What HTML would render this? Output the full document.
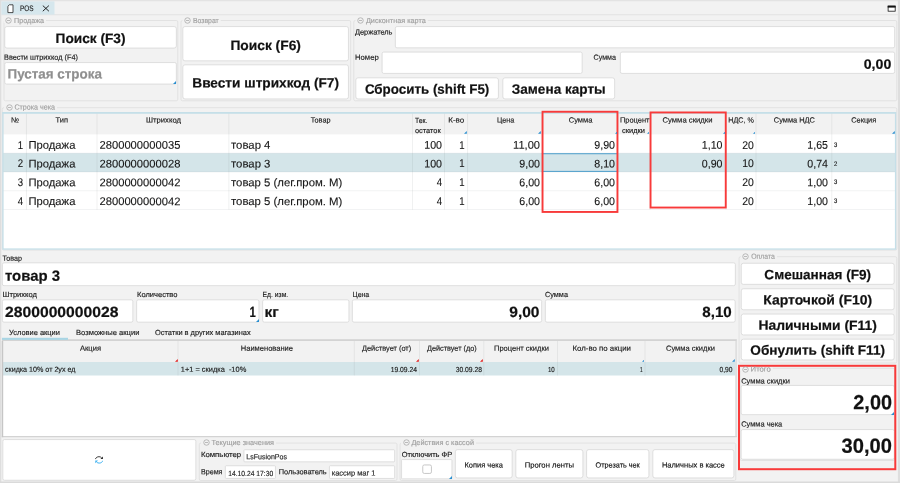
<!DOCTYPE html>
<html lang="ru"><head><meta charset="utf-8"><title>POS</title>
<style>
html,body{margin:0;padding:0;background:#f2f2f2;}
#r{position:relative;width:900px;height:483px;overflow:hidden;font-family:"Liberation Sans",sans-serif;}
#tl{position:absolute;left:0;top:0;width:900px;height:483px;will-change:transform;}
.b{position:absolute;box-sizing:border-box;display:block;}
.t{position:absolute;white-space:pre;text-rendering:geometricPrecision;}
</style></head>
<body><div id="r">
<svg class="b" style="left:0;top:0" width="900" height="483" viewBox="0 0 900 483">
<rect x="0.00" y="0.00" width="900.00" height="483.00" rx="0.00" fill="#f2f2f2"/>
<rect x="0.00" y="0.00" width="900.00" height="1.30" rx="0.00" fill="#e3e3e3"/>
<rect x="0.00" y="0.00" width="1.30" height="483.00" rx="0.00" fill="#dedede"/>
<rect x="897.90" y="0.00" width="2.10" height="483.00" rx="0.00" fill="#dedede"/>
<rect x="0.00" y="481.50" width="900.00" height="1.50" rx="0.00" fill="#dadada"/>
<rect x="1.40" y="14.30" width="896.60" height="0.90" rx="0.00" fill="#e2e2e2"/>
<rect x="1.40" y="1.40" width="53.10" height="13.20" rx="0.00" fill="#d6e7ed"/>
<rect x="4.00" y="20.50" width="173.80" height="80.30" rx="1.50" fill="none" stroke="#e2e2e2" stroke-width="1"/>
<rect x="3.60" y="17.00" width="42.40" height="6.00" rx="0.00" fill="#f2f2f2"/>
<rect x="4.75" y="26.55" width="171.60" height="21.50" rx="2.15" fill="#fff" stroke="#d2d2d2" stroke-width="0.7"/>
<rect x="4.75" y="62.55" width="171.60" height="21.50" rx="1.65" fill="#fff" stroke="#d2d2d2" stroke-width="0.7"/>
<rect x="181.00" y="20.50" width="169.70" height="80.30" rx="1.50" fill="none" stroke="#e2e2e2" stroke-width="1"/>
<rect x="182.50" y="17.00" width="38.25" height="6.00" rx="0.00" fill="#f2f2f2"/>
<rect x="182.85" y="26.55" width="165.60" height="34.30" rx="2.15" fill="#fff" stroke="#d2d2d2" stroke-width="0.7"/>
<rect x="182.85" y="64.85" width="165.60" height="34.10" rx="2.15" fill="#fff" stroke="#d2d2d2" stroke-width="0.7"/>
<rect x="353.80" y="20.50" width="543.00" height="80.30" rx="1.50" fill="none" stroke="#e2e2e2" stroke-width="1"/>
<rect x="355.50" y="17.00" width="72.25" height="6.00" rx="0.00" fill="#f2f2f2"/>
<rect x="395.35" y="26.55" width="499.30" height="21.30" rx="1.65" fill="#fff" stroke="#d2d2d2" stroke-width="0.7"/>
<rect x="382.10" y="52.10" width="200.05" height="21.30" rx="1.65" fill="#fff" stroke="#d2d2d2" stroke-width="0.7"/>
<rect x="620.35" y="52.10" width="274.30" height="21.30" rx="1.65" fill="#fff" stroke="#d2d2d2" stroke-width="0.7"/>
<rect x="355.85" y="77.85" width="142.55" height="21.10" rx="2.15" fill="#fff" stroke="#d2d2d2" stroke-width="0.7"/>
<rect x="502.85" y="77.85" width="111.80" height="21.10" rx="2.15" fill="#fff" stroke="#d2d2d2" stroke-width="0.7"/>
<rect x="2.30" y="107.70" width="894.50" height="142.40" rx="1.50" fill="none" stroke="#e2e2e2" stroke-width="1"/>
<rect x="4.00" y="104.20" width="53.00" height="6.00" rx="0.00" fill="#f2f2f2"/>
<rect x="3.00" y="112.60" width="892.60" height="136.60" rx="0.00" fill="#fff"/>
<rect x="3.00" y="112.60" width="892.60" height="21.80" rx="0.00" fill="#f2f2f2"/>
<rect x="3.00" y="153.20" width="892.60" height="18.80" rx="0.00" fill="#d4e5e9"/>
<rect x="3.00" y="152.70" width="892.60" height="0.90" rx="0.00" fill="rgba(120,130,135,0.10)"/>
<rect x="3.00" y="171.50" width="892.60" height="0.90" rx="0.00" fill="rgba(120,130,135,0.10)"/>
<rect x="3.00" y="190.30" width="892.60" height="0.90" rx="0.00" fill="rgba(120,130,135,0.10)"/>
<rect x="3.00" y="209.10" width="892.60" height="0.90" rx="0.00" fill="rgba(120,130,135,0.10)"/>
<rect x="25.95" y="112.60" width="0.90" height="97.00" rx="0.00" fill="rgba(120,130,135,0.13)"/>
<rect x="96.55" y="112.60" width="0.90" height="97.00" rx="0.00" fill="rgba(120,130,135,0.13)"/>
<rect x="228.45" y="112.60" width="0.90" height="97.00" rx="0.00" fill="rgba(120,130,135,0.13)"/>
<rect x="412.05" y="112.60" width="0.90" height="97.00" rx="0.00" fill="rgba(120,130,135,0.13)"/>
<rect x="444.05" y="112.60" width="0.90" height="97.00" rx="0.00" fill="rgba(120,130,135,0.13)"/>
<rect x="467.15" y="112.60" width="0.90" height="97.00" rx="0.00" fill="rgba(120,130,135,0.13)"/>
<rect x="541.35" y="112.60" width="0.90" height="97.00" rx="0.00" fill="rgba(120,130,135,0.13)"/>
<rect x="617.55" y="112.60" width="0.90" height="97.00" rx="0.00" fill="rgba(120,130,135,0.13)"/>
<rect x="649.55" y="112.60" width="0.90" height="97.00" rx="0.00" fill="rgba(120,130,135,0.13)"/>
<rect x="725.55" y="112.60" width="0.90" height="97.00" rx="0.00" fill="rgba(120,130,135,0.13)"/>
<rect x="755.55" y="112.60" width="0.90" height="97.00" rx="0.00" fill="rgba(120,130,135,0.13)"/>
<rect x="831.35" y="112.60" width="0.90" height="97.00" rx="0.00" fill="rgba(120,130,135,0.13)"/>
<rect x="2.95" y="112.65" width="892.60" height="136.40" rx="0.00" fill="none" stroke="#c5dfe8" stroke-width="1.3"/>
<rect x="2.30" y="112.10" width="893.90" height="1.60" rx="0.00" fill="#c5dfe8"/>
<rect x="541.80" y="153.30" width="76.20" height="0.90" rx="0.00" fill="#3f97c9"/>
<rect x="541.80" y="170.90" width="76.20" height="0.90" rx="0.00" fill="#3f97c9"/>
<rect x="542.55" y="111.75" width="74.90" height="100.20" rx="0.00" fill="none" stroke="#f83a3a" stroke-width="1.9"/>
<rect x="650.55" y="112.45" width="75.20" height="95.10" rx="0.00" fill="none" stroke="#f83a3a" stroke-width="1.9"/>
<rect x="2.35" y="262.85" width="733.00" height="22.80" rx="1.65" fill="#fff" stroke="#d2d2d2" stroke-width="0.7"/>
<rect x="2.35" y="299.85" width="130.50" height="22.30" rx="1.65" fill="#fff" stroke="#d2d2d2" stroke-width="0.7"/>
<rect x="136.65" y="299.85" width="122.30" height="22.30" rx="1.65" fill="#fff" stroke="#d2d2d2" stroke-width="0.7"/>
<rect x="262.65" y="299.85" width="86.30" height="22.30" rx="1.65" fill="#fff" stroke="#d2d2d2" stroke-width="0.7"/>
<rect x="352.35" y="299.85" width="189.30" height="22.30" rx="1.65" fill="#fff" stroke="#d2d2d2" stroke-width="0.7"/>
<rect x="545.35" y="299.85" width="189.80" height="22.30" rx="1.65" fill="#fff" stroke="#d2d2d2" stroke-width="0.7"/>
<rect x="2.00" y="339.20" width="734.80" height="1.90" rx="0.00" fill="#d3d3d3"/>
<rect x="2.00" y="337.80" width="66.00" height="2.10" rx="0.00" fill="#a9d5e4"/>
<rect x="3.00" y="341.00" width="732.40" height="95.00" rx="0.00" fill="#fff"/>
<rect x="3.00" y="341.00" width="732.40" height="21.00" rx="0.00" fill="#f2f2f2"/>
<rect x="3.00" y="362.00" width="732.40" height="13.50" rx="0.00" fill="#d4e5e9"/>
<rect x="177.55" y="341.00" width="0.90" height="34.50" rx="0.00" fill="rgba(120,130,135,0.13)"/>
<rect x="353.85" y="341.00" width="0.90" height="34.50" rx="0.00" fill="rgba(120,130,135,0.13)"/>
<rect x="419.05" y="341.00" width="0.90" height="34.50" rx="0.00" fill="rgba(120,130,135,0.13)"/>
<rect x="483.35" y="341.00" width="0.90" height="34.50" rx="0.00" fill="rgba(120,130,135,0.13)"/>
<rect x="557.05" y="341.00" width="0.90" height="34.50" rx="0.00" fill="rgba(120,130,135,0.13)"/>
<rect x="644.55" y="341.00" width="0.90" height="34.50" rx="0.00" fill="rgba(120,130,135,0.13)"/>
<rect x="735.40" y="341.00" width="1.40" height="96.00" rx="0.00" fill="#dadada"/>
<rect x="1.80" y="436.00" width="735.00" height="1.20" rx="0.00" fill="#d3d3d3"/>
<rect x="1.80" y="341.00" width="1.40" height="96.20" rx="0.00" fill="#c6c6c6"/>
<rect x="739.10" y="256.70" width="157.70" height="106.30" rx="1.50" fill="none" stroke="#e2e2e2" stroke-width="1"/>
<rect x="740.80" y="253.20" width="36.20" height="6.00" rx="0.00" fill="#f2f2f2"/>
<rect x="741.25" y="263.25" width="152.90" height="21.10" rx="2.15" fill="#fff" stroke="#d2d2d2" stroke-width="0.7"/>
<rect x="741.25" y="288.75" width="152.90" height="21.00" rx="2.15" fill="#fff" stroke="#d2d2d2" stroke-width="0.7"/>
<rect x="741.25" y="314.05" width="152.90" height="20.90" rx="2.15" fill="#fff" stroke="#d2d2d2" stroke-width="0.7"/>
<rect x="741.25" y="339.15" width="152.90" height="20.80" rx="2.15" fill="#fff" stroke="#d2d2d2" stroke-width="0.7"/>
<rect x="740.00" y="368.30" width="154.50" height="92.20" rx="1.50" fill="none" stroke="#e2e2e2" stroke-width="1"/>
<rect x="740.20" y="364.80" width="32.60" height="6.00" rx="0.00" fill="#f2f2f2"/>
<rect x="741.15" y="385.45" width="153.10" height="29.20" rx="1.65" fill="#fff" stroke="#d2d2d2" stroke-width="0.7"/>
<rect x="741.15" y="429.55" width="153.10" height="29.70" rx="1.65" fill="#fff" stroke="#d2d2d2" stroke-width="0.7"/>
<rect x="739.00" y="365.80" width="156.30" height="103.40" rx="0.00" fill="none" stroke="#f83a3a" stroke-width="2.0"/>
<rect x="2.85" y="439.55" width="193.00" height="40.70" rx="1.65" fill="#fff" stroke="#d2d2d2" stroke-width="0.7"/>
<rect x="199.30" y="443.10" width="197.70" height="37.40" rx="1.50" fill="none" stroke="#e2e2e2" stroke-width="1"/>
<rect x="201.00" y="439.60" width="75.00" height="6.00" rx="0.00" fill="#f2f2f2"/>
<rect x="243.95" y="449.75" width="150.70" height="12.10" rx="0.85" fill="#fff" stroke="#d2d2d2" stroke-width="0.7"/>
<rect x="225.35" y="465.75" width="50.10" height="12.70" rx="0.85" fill="#fff" stroke="#d2d2d2" stroke-width="0.7"/>
<rect x="329.45" y="465.75" width="65.20" height="12.70" rx="0.85" fill="#fff" stroke="#d2d2d2" stroke-width="0.7"/>
<rect x="400.10" y="443.10" width="335.70" height="37.40" rx="1.50" fill="none" stroke="#e2e2e2" stroke-width="1"/>
<rect x="401.00" y="439.60" width="75.00" height="6.00" rx="0.00" fill="#f2f2f2"/>
<rect x="401.55" y="459.55" width="50.40" height="19.30" rx="0.85" fill="#fff" stroke="#d2d2d2" stroke-width="0.7"/>
<rect x="422.75" y="464.95" width="8.70" height="8.50" rx="1.55" fill="#fff" stroke="#c2c2c2" stroke-width="0.9"/>
<rect x="455.35" y="449.65" width="56.80" height="28.30" rx="2.15" fill="#fff" stroke="#d2d2d2" stroke-width="0.7"/>
<rect x="515.85" y="449.65" width="67.05" height="28.30" rx="2.15" fill="#fff" stroke="#d2d2d2" stroke-width="0.7"/>
<rect x="586.60" y="449.65" width="62.30" height="28.30" rx="2.15" fill="#fff" stroke="#d2d2d2" stroke-width="0.7"/>
<rect x="652.85" y="449.65" width="81.05" height="28.30" rx="2.15" fill="#fff" stroke="#d2d2d2" stroke-width="0.7"/>
</svg>
<div id="tl">
<svg class="b" style="left:6.7px;top:3.6px" width="8" height="10" viewBox="0 0 8 10"><path d="M2.3 0.8 H6.0 V8.6 H0.9 V2.2 Z" fill="#fff" stroke="#222" stroke-width="0.8" stroke-linejoin="round"/></svg>
<div class="t" style="left:20px;top:5px;font-size:8px;line-height:8px;color:#222;-webkit-text-stroke:0.15px #222;transform-origin:0.00px 50%;transform:translate(0.00px,0.40px) rotate(0.03deg) scaleX(0.8057);">POS</div>
<svg class="b" style="left:41.5px;top:5.3px" width="8" height="7" viewBox="0 0 8 7"><path d="M0.8 0.6 L6.9 6.2 M6.9 0.6 L0.8 6.2" stroke="#111" stroke-width="0.9" fill="none"/></svg>
<svg class="b" style="left:887.4px;top:5.2px" width="9.4" height="7.4" viewBox="0 0 9.4 7.4"><rect x="0" y="0" width="9.4" height="7.4" fill="#fafafa"/><rect x="1.1" y="1.1" width="7.1" height="5.1" fill="#fff" stroke="#111" stroke-width="0.8"/><rect x="0.7" y="0.7" width="7.9" height="1.9" fill="#111"/></svg>
<svg class="b" style="left:5.10px;top:16.90px" width="7" height="7" viewBox="0 0 7 7"><circle cx="3.5" cy="3.5" r="2.75" fill="none" stroke="#a0a0a0" stroke-width="0.7"/><line x1="2" y1="3.5" x2="5" y2="3.5" stroke="#a0a0a0" stroke-width="0.7"/></svg>
<div class="t" style="left:14px;top:16px;font-size:7.3px;line-height:7.3px;color:#a0a0a0;-webkit-text-stroke:0.15px #a0a0a0;transform-origin:0.00px 50%;transform:translate(0.00px,0.90px) rotate(0.03deg) scaleX(0.9832);">Продажа</div>
<div class="t" style="left:55px;top:32px;font-size:13.6px;line-height:13.6px;color:#111;font-weight:bold;-webkit-text-stroke:0.2px #111;transform-origin:34.75px 50%;transform:translate(0.80px,0.10px) rotate(0.03deg) scaleX(1.0073);">Поиск (F3)</div>
<div class="t" style="left:4px;top:53px;font-size:7.4px;line-height:7.4px;color:#1a1a1a;-webkit-text-stroke:0.15px #1a1a1a;transform-origin:0.00px 50%;transform:translate(0.00px,0.70px) rotate(0.03deg) scaleX(0.9911);">Ввести штрихкод (F4)</div>
<div class="t" style="left:7px;top:67px;font-size:13.6px;line-height:13.6px;color:#8f8f8f;font-weight:bold;-webkit-text-stroke:0.2px #8f8f8f;transform-origin:0.00px 50%;transform:translate(0.50px,0.50px) rotate(0.03deg) scaleX(0.9863);">Пустая строка</div>
<svg class="b" style="left:172.80px;top:80.60px" width="3.0" height="3.0" viewBox="0 0 10 10"><polygon points="10,0 10,10 0,10" fill="#2a8fd0"/></svg>
<svg class="b" style="left:184.00px;top:16.90px" width="7" height="7" viewBox="0 0 7 7"><circle cx="3.5" cy="3.5" r="2.75" fill="none" stroke="#a0a0a0" stroke-width="0.7"/><line x1="2" y1="3.5" x2="5" y2="3.5" stroke="#a0a0a0" stroke-width="0.7"/></svg>
<div class="t" style="left:192px;top:16px;font-size:7.3px;line-height:7.3px;color:#a0a0a0;-webkit-text-stroke:0.15px #a0a0a0;transform-origin:0.00px 50%;transform:translate(0.90px,0.90px) rotate(0.03deg) scaleX(0.9443);">Возврат</div>
<div class="t" style="left:230px;top:39px;font-size:13.6px;line-height:13.6px;color:#111;font-weight:bold;-webkit-text-stroke:0.2px #111;transform-origin:34.75px 50%;transform:translate(0.90px,0.00px) rotate(0.03deg) scaleX(1.0144);">Поиск (F6)</div>
<div class="t" style="left:192px;top:76px;font-size:13.6px;line-height:13.6px;color:#111;font-weight:bold;-webkit-text-stroke:0.2px #111;transform-origin:73.03px 50%;transform:translate(0.62px,0.50px) rotate(0.03deg) scaleX(1.0047);">Ввести штрихкод (F7)</div>
<svg class="b" style="left:357.00px;top:16.90px" width="7" height="7" viewBox="0 0 7 7"><circle cx="3.5" cy="3.5" r="2.75" fill="none" stroke="#a0a0a0" stroke-width="0.7"/><line x1="2" y1="3.5" x2="5" y2="3.5" stroke="#a0a0a0" stroke-width="0.7"/></svg>
<div class="t" style="left:365px;top:16px;font-size:7.3px;line-height:7.3px;color:#a0a0a0;-webkit-text-stroke:0.15px #a0a0a0;transform-origin:0.00px 50%;transform:translate(0.90px,0.90px) rotate(0.03deg) scaleX(0.9956);">Дисконтная карта</div>
<div class="t" style="left:355px;top:28px;font-size:7.4px;line-height:7.4px;color:#1a1a1a;-webkit-text-stroke:0.15px #1a1a1a;transform-origin:0.00px 50%;transform:translate(0.00px,0.60px) rotate(0.03deg) scaleX(1.0005);">Держатель</div>
<div class="t" style="left:355px;top:53px;font-size:7.4px;line-height:7.4px;color:#1a1a1a;-webkit-text-stroke:0.15px #1a1a1a;transform-origin:0.00px 50%;transform:translate(0.00px,0.80px) rotate(0.03deg) scaleX(1.0420);">Номер</div>
<div class="t" style="left:593px;top:53px;font-size:7.4px;line-height:7.4px;color:#1a1a1a;-webkit-text-stroke:0.15px #1a1a1a;transform-origin:0.00px 50%;transform:translate(0.50px,0.80px) rotate(0.03deg) scaleX(0.9668);">Сумма</div>
<div class="t" style="left:864px;top:57px;font-size:13.6px;line-height:13.6px;color:#111;font-weight:bold;-webkit-text-stroke:0.2px #111;transform-origin:26.45px 50%;transform:translate(0.80px,0.75px) rotate(0.03deg) scaleX(1.0396);">0,00</div>
<div class="t" style="left:363px;top:82px;font-size:13.6px;line-height:13.6px;color:#111;font-weight:bold;-webkit-text-stroke:0.2px #111;transform-origin:63.31px 50%;transform:translate(0.82px,0.75px) rotate(0.03deg) scaleX(0.9833);">Сбросить (shift F5)</div>
<div class="t" style="left:511px;top:82px;font-size:13.6px;line-height:13.6px;color:#111;font-weight:bold;-webkit-text-stroke:0.2px #111;transform-origin:47.02px 50%;transform:translate(0.73px,0.75px) rotate(0.03deg) scaleX(0.9995);">Замена карты</div>
<svg class="b" style="left:5.50px;top:103.60px" width="7" height="7" viewBox="0 0 7 7"><circle cx="3.5" cy="3.5" r="2.75" fill="none" stroke="#a0a0a0" stroke-width="0.7"/><line x1="2" y1="3.5" x2="5" y2="3.5" stroke="#a0a0a0" stroke-width="0.7"/></svg>
<div class="t" style="left:14px;top:103px;font-size:7.3px;line-height:7.3px;color:#a0a0a0;-webkit-text-stroke:0.15px #a0a0a0;transform-origin:0.00px 50%;transform:translate(0.40px,0.60px) rotate(0.03deg) scaleX(0.9783);">Строка чека</div>
<div class="t" style="left:11px;top:116px;font-size:7.4px;line-height:7.4px;color:#1a1a1a;-webkit-text-stroke:0.15px #1a1a1a;transform-origin:3.98px 50%;transform:translate(0.02px,0.50px) rotate(0.03deg) scaleX(1.0057);">№</div>
<div class="t" style="left:55px;top:116px;font-size:7.4px;line-height:7.4px;color:#1a1a1a;-webkit-text-stroke:0.15px #1a1a1a;transform-origin:6.16px 50%;transform:translate(0.59px,0.50px) rotate(0.03deg) scaleX(1.0145);">Тип</div>
<div class="t" style="left:146px;top:116px;font-size:7.4px;line-height:7.4px;color:#1a1a1a;-webkit-text-stroke:0.15px #1a1a1a;transform-origin:16.85px 50%;transform:translate(0.65px,0.50px) rotate(0.03deg) scaleX(1.0384);">Штрихкод</div>
<div class="t" style="left:310px;top:116px;font-size:7.4px;line-height:7.4px;color:#1a1a1a;-webkit-text-stroke:0.15px #1a1a1a;transform-origin:10.06px 50%;transform:translate(0.54px,0.50px) rotate(0.03deg) scaleX(0.9812);">Товар</div>
<div class="t" style="left:415px;top:116px;font-size:7.4px;line-height:7.4px;color:#1a1a1a;-webkit-text-stroke:0.15px #1a1a1a;transform-origin:0.00px 50%;transform:translate(0.00px,0.50px) rotate(0.03deg) scaleX(0.9256);">Тек.</div>
<div class="t" style="left:415px;top:127px;font-size:7.4px;line-height:7.4px;color:#1a1a1a;-webkit-text-stroke:0.15px #1a1a1a;transform-origin:0.00px 50%;transform:translate(0.00px,0.00px) rotate(0.03deg) scaleX(0.9985);">остаток</div>
<div class="t" style="left:448px;top:116px;font-size:7.4px;line-height:7.4px;color:#1a1a1a;-webkit-text-stroke:0.15px #1a1a1a;transform-origin:7.36px 50%;transform:translate(0.89px,0.50px) rotate(0.03deg) scaleX(1.0865);">К-во</div>
<div class="t" style="left:496px;top:116px;font-size:7.4px;line-height:7.4px;color:#1a1a1a;-webkit-text-stroke:0.15px #1a1a1a;transform-origin:8.92px 50%;transform:translate(0.68px,0.50px) rotate(0.03deg) scaleX(0.9673);">Цена</div>
<div class="t" style="left:568px;top:116px;font-size:7.4px;line-height:7.4px;color:#1a1a1a;-webkit-text-stroke:0.15px #1a1a1a;transform-origin:11.64px 50%;transform:translate(0.96px,0.50px) rotate(0.03deg) scaleX(1.0205);">Сумма</div>
<div class="t" style="left:620px;top:116px;font-size:7.4px;line-height:7.4px;color:#1a1a1a;-webkit-text-stroke:0.15px #1a1a1a;transform-origin:14.65px 50%;transform:translate(0.10px,0.50px) rotate(0.03deg) scaleX(1.0067);">Процент</div>
<div class="t" style="left:622px;top:127px;font-size:7.4px;line-height:7.4px;color:#1a1a1a;-webkit-text-stroke:0.15px #1a1a1a;transform-origin:11.38px 50%;transform:translate(0.12px,0.00px) rotate(0.03deg) scaleX(1.0108);">скидки</div>
<div class="t" style="left:663px;top:116px;font-size:7.4px;line-height:7.4px;color:#1a1a1a;-webkit-text-stroke:0.15px #1a1a1a;transform-origin:24.03px 50%;transform:translate(0.47px,0.50px) rotate(0.03deg) scaleX(1.0403);">Сумма скидки</div>
<div class="t" style="left:727px;top:116px;font-size:7.4px;line-height:7.4px;color:#1a1a1a;-webkit-text-stroke:0.15px #1a1a1a;transform-origin:13.19px 50%;transform:translate(0.81px,0.50px) rotate(0.03deg) scaleX(0.9666);">НДС, %</div>
<div class="t" style="left:773px;top:116px;font-size:7.4px;line-height:7.4px;color:#1a1a1a;-webkit-text-stroke:0.15px #1a1a1a;transform-origin:20.50px 50%;transform:translate(0.90px,0.50px) rotate(0.03deg) scaleX(1.0062);">Сумма НДС</div>
<div class="t" style="left:851px;top:116px;font-size:7.4px;line-height:7.4px;color:#1a1a1a;-webkit-text-stroke:0.15px #1a1a1a;transform-origin:12.54px 50%;transform:translate(0.21px,0.50px) rotate(0.03deg) scaleX(0.9966);">Секция</div>
<svg class="b" style="left:464.10px;top:131.00px" width="2.8" height="2.8" viewBox="0 0 10 10"><polygon points="10,0 10,10 0,10" fill="#2a8fd0"/></svg>
<svg class="b" style="left:538.30px;top:131.00px" width="2.8" height="2.8" viewBox="0 0 10 10"><polygon points="10,0 10,10 0,10" fill="#2a8fd0"/></svg>
<svg class="b" style="left:614.50px;top:131.00px" width="2.8" height="2.8" viewBox="0 0 10 10"><polygon points="10,0 10,10 0,10" fill="#2a8fd0"/></svg>
<svg class="b" style="left:646.50px;top:131.00px" width="2.8" height="2.8" viewBox="0 0 10 10"><polygon points="10,0 10,10 0,10" fill="#2a8fd0"/></svg>
<svg class="b" style="left:722.50px;top:131.00px" width="2.8" height="2.8" viewBox="0 0 10 10"><polygon points="10,0 10,10 0,10" fill="#2a8fd0"/></svg>
<svg class="b" style="left:752.50px;top:131.00px" width="2.8" height="2.8" viewBox="0 0 10 10"><polygon points="10,0 10,10 0,10" fill="#2a8fd0"/></svg>
<svg class="b" style="left:892.00px;top:131.00px" width="2.8" height="2.8" viewBox="0 0 10 10"><polygon points="10,0 10,10 0,10" fill="#2a8fd0"/></svg>
<div class="t" style="left:16px;top:140px;font-size:11.2px;line-height:11.2px;color:#161616;-webkit-text-stroke:0.12px #161616;transform-origin:6.22px 50%;transform:translate(0.78px,0.70px) rotate(0.03deg) scaleX(0.8575);">1</div>
<div class="t" style="left:28px;top:140px;font-size:11.2px;line-height:11.2px;color:#161616;-webkit-text-stroke:0.12px #161616;transform-origin:0.00px 50%;transform:translate(0.50px,0.70px) rotate(0.03deg) scaleX(1.0039);">Продажа</div>
<div class="t" style="left:99px;top:140px;font-size:11.2px;line-height:11.2px;color:#161616;-webkit-text-stroke:0.12px #161616;transform-origin:0.00px 50%;transform:translate(0.50px,0.70px) rotate(0.03deg) scaleX(1.0003);">2800000000035</div>
<div class="t" style="left:231px;top:140px;font-size:11.2px;line-height:11.2px;color:#161616;-webkit-text-stroke:0.12px #161616;transform-origin:0.00px 50%;transform:translate(0.00px,0.70px) rotate(0.03deg) scaleX(1.0164);">товар 4</div>
<div class="t" style="left:423px;top:140px;font-size:11.2px;line-height:11.2px;color:#161616;-webkit-text-stroke:0.12px #161616;transform-origin:18.70px 50%;transform:translate(0.30px,0.70px) rotate(0.03deg) scaleX(0.9511);">100</div>
<div class="t" style="left:458px;top:140px;font-size:11.2px;line-height:11.2px;color:#161616;-webkit-text-stroke:0.12px #161616;transform-origin:6.22px 50%;transform:translate(0.28px,0.70px) rotate(0.03deg) scaleX(0.8575);">1</div>
<div class="t" style="left:512px;top:140px;font-size:11.2px;line-height:11.2px;color:#161616;-webkit-text-stroke:0.12px #161616;transform-origin:27.22px 50%;transform:translate(0.78px,0.70px) rotate(0.03deg) scaleX(0.9891);">11,00</div>
<div class="t" style="left:593px;top:140px;font-size:11.2px;line-height:11.2px;color:#161616;-webkit-text-stroke:0.12px #161616;transform-origin:21.78px 50%;transform:translate(0.22px,0.70px) rotate(0.03deg) scaleX(0.9498);">9,90</div>
<div class="t" style="left:700px;top:140px;font-size:11.2px;line-height:11.2px;color:#161616;-webkit-text-stroke:0.12px #161616;transform-origin:21.78px 50%;transform:translate(0.72px,0.70px) rotate(0.03deg) scaleX(0.9498);">1,10</div>
<div class="t" style="left:741px;top:140px;font-size:11.2px;line-height:11.2px;color:#161616;-webkit-text-stroke:0.12px #161616;transform-origin:12.43px 50%;transform:translate(0.32px,0.70px) rotate(0.03deg) scaleX(0.9299);">20</div>
<div class="t" style="left:806px;top:140px;font-size:11.2px;line-height:11.2px;color:#161616;-webkit-text-stroke:0.12px #161616;transform-origin:21.78px 50%;transform:translate(0.22px,0.70px) rotate(0.03deg) scaleX(0.9498);">1,65</div>
<div class="t" style="left:834px;top:142px;font-size:6.4px;line-height:6.4px;color:#161616;-webkit-text-stroke:0.15px #161616;transform-origin:0.00px 50%;transform:translate(0.00px,0.70px) rotate(0.03deg) scaleX(0.9291);">3</div>
<div class="t" style="left:16px;top:159px;font-size:11.2px;line-height:11.2px;color:#161616;-webkit-text-stroke:0.12px #161616;transform-origin:6.22px 50%;transform:translate(0.78px,0.50px) rotate(0.03deg) scaleX(0.8575);">2</div>
<div class="t" style="left:28px;top:159px;font-size:11.2px;line-height:11.2px;color:#161616;-webkit-text-stroke:0.12px #161616;transform-origin:0.00px 50%;transform:translate(0.50px,0.50px) rotate(0.03deg) scaleX(1.0039);">Продажа</div>
<div class="t" style="left:99px;top:159px;font-size:11.2px;line-height:11.2px;color:#161616;-webkit-text-stroke:0.12px #161616;transform-origin:0.00px 50%;transform:translate(0.50px,0.50px) rotate(0.03deg) scaleX(1.0003);">2800000000028</div>
<div class="t" style="left:231px;top:159px;font-size:11.2px;line-height:11.2px;color:#161616;-webkit-text-stroke:0.12px #161616;transform-origin:0.00px 50%;transform:translate(0.00px,0.50px) rotate(0.03deg) scaleX(1.0164);">товар 3</div>
<div class="t" style="left:423px;top:159px;font-size:11.2px;line-height:11.2px;color:#161616;-webkit-text-stroke:0.12px #161616;transform-origin:18.70px 50%;transform:translate(0.30px,0.50px) rotate(0.03deg) scaleX(0.9511);">100</div>
<div class="t" style="left:458px;top:159px;font-size:11.2px;line-height:11.2px;color:#161616;-webkit-text-stroke:0.12px #161616;transform-origin:6.22px 50%;transform:translate(0.28px,0.50px) rotate(0.03deg) scaleX(0.8575);">1</div>
<div class="t" style="left:518px;top:159px;font-size:11.2px;line-height:11.2px;color:#161616;-webkit-text-stroke:0.12px #161616;transform-origin:21.78px 50%;transform:translate(0.22px,0.50px) rotate(0.03deg) scaleX(0.9498);">9,00</div>
<div class="t" style="left:593px;top:159px;font-size:11.2px;line-height:11.2px;color:#161616;-webkit-text-stroke:0.12px #161616;transform-origin:21.78px 50%;transform:translate(0.22px,0.50px) rotate(0.03deg) scaleX(0.9498);">8,10</div>
<div class="t" style="left:700px;top:159px;font-size:11.2px;line-height:11.2px;color:#161616;-webkit-text-stroke:0.12px #161616;transform-origin:21.78px 50%;transform:translate(0.72px,0.50px) rotate(0.03deg) scaleX(0.9498);">0,90</div>
<div class="t" style="left:741px;top:159px;font-size:11.2px;line-height:11.2px;color:#161616;-webkit-text-stroke:0.12px #161616;transform-origin:12.43px 50%;transform:translate(0.32px,0.50px) rotate(0.03deg) scaleX(0.9299);">10</div>
<div class="t" style="left:806px;top:159px;font-size:11.2px;line-height:11.2px;color:#161616;-webkit-text-stroke:0.12px #161616;transform-origin:21.78px 50%;transform:translate(0.22px,0.50px) rotate(0.03deg) scaleX(0.9498);">0,74</div>
<div class="t" style="left:834px;top:161px;font-size:6.4px;line-height:6.4px;color:#161616;-webkit-text-stroke:0.15px #161616;transform-origin:0.00px 50%;transform:translate(0.00px,0.50px) rotate(0.03deg) scaleX(0.9291);">2</div>
<div class="t" style="left:16px;top:178px;font-size:11.2px;line-height:11.2px;color:#161616;-webkit-text-stroke:0.12px #161616;transform-origin:6.22px 50%;transform:translate(0.78px,0.30px) rotate(0.03deg) scaleX(0.8575);">3</div>
<div class="t" style="left:28px;top:178px;font-size:11.2px;line-height:11.2px;color:#161616;-webkit-text-stroke:0.12px #161616;transform-origin:0.00px 50%;transform:translate(0.50px,0.30px) rotate(0.03deg) scaleX(1.0039);">Продажа</div>
<div class="t" style="left:99px;top:178px;font-size:11.2px;line-height:11.2px;color:#161616;-webkit-text-stroke:0.12px #161616;transform-origin:0.00px 50%;transform:translate(0.50px,0.30px) rotate(0.03deg) scaleX(1.0003);">2800000000042</div>
<div class="t" style="left:231px;top:178px;font-size:11.2px;line-height:11.2px;color:#161616;-webkit-text-stroke:0.12px #161616;transform-origin:0.00px 50%;transform:translate(0.00px,0.30px) rotate(0.03deg) scaleX(1.0153);">товар 5 (лег.пром. М)</div>
<div class="t" style="left:435px;top:178px;font-size:11.2px;line-height:11.2px;color:#161616;-webkit-text-stroke:0.12px #161616;transform-origin:6.22px 50%;transform:translate(0.78px,0.30px) rotate(0.03deg) scaleX(0.8575);">4</div>
<div class="t" style="left:458px;top:178px;font-size:11.2px;line-height:11.2px;color:#161616;-webkit-text-stroke:0.12px #161616;transform-origin:6.22px 50%;transform:translate(0.28px,0.30px) rotate(0.03deg) scaleX(0.8575);">1</div>
<div class="t" style="left:518px;top:178px;font-size:11.2px;line-height:11.2px;color:#161616;-webkit-text-stroke:0.12px #161616;transform-origin:21.78px 50%;transform:translate(0.22px,0.30px) rotate(0.03deg) scaleX(0.9498);">6,00</div>
<div class="t" style="left:593px;top:178px;font-size:11.2px;line-height:11.2px;color:#161616;-webkit-text-stroke:0.12px #161616;transform-origin:21.78px 50%;transform:translate(0.22px,0.30px) rotate(0.03deg) scaleX(0.9498);">6,00</div>
<div class="t" style="left:741px;top:178px;font-size:11.2px;line-height:11.2px;color:#161616;-webkit-text-stroke:0.12px #161616;transform-origin:12.43px 50%;transform:translate(0.32px,0.30px) rotate(0.03deg) scaleX(0.9299);">20</div>
<div class="t" style="left:806px;top:178px;font-size:11.2px;line-height:11.2px;color:#161616;-webkit-text-stroke:0.12px #161616;transform-origin:21.78px 50%;transform:translate(0.22px,0.30px) rotate(0.03deg) scaleX(0.9498);">1,00</div>
<div class="t" style="left:834px;top:180px;font-size:6.4px;line-height:6.4px;color:#161616;-webkit-text-stroke:0.15px #161616;transform-origin:0.00px 50%;transform:translate(0.00px,0.30px) rotate(0.03deg) scaleX(0.9291);">3</div>
<div class="t" style="left:16px;top:197px;font-size:11.2px;line-height:11.2px;color:#161616;-webkit-text-stroke:0.12px #161616;transform-origin:6.22px 50%;transform:translate(0.78px,0.10px) rotate(0.03deg) scaleX(0.8575);">4</div>
<div class="t" style="left:28px;top:197px;font-size:11.2px;line-height:11.2px;color:#161616;-webkit-text-stroke:0.12px #161616;transform-origin:0.00px 50%;transform:translate(0.50px,0.10px) rotate(0.03deg) scaleX(1.0039);">Продажа</div>
<div class="t" style="left:99px;top:197px;font-size:11.2px;line-height:11.2px;color:#161616;-webkit-text-stroke:0.12px #161616;transform-origin:0.00px 50%;transform:translate(0.50px,0.10px) rotate(0.03deg) scaleX(1.0003);">2800000000042</div>
<div class="t" style="left:231px;top:197px;font-size:11.2px;line-height:11.2px;color:#161616;-webkit-text-stroke:0.12px #161616;transform-origin:0.00px 50%;transform:translate(0.00px,0.10px) rotate(0.03deg) scaleX(1.0153);">товар 5 (лег.пром. М)</div>
<div class="t" style="left:435px;top:197px;font-size:11.2px;line-height:11.2px;color:#161616;-webkit-text-stroke:0.12px #161616;transform-origin:6.22px 50%;transform:translate(0.78px,0.10px) rotate(0.03deg) scaleX(0.8575);">4</div>
<div class="t" style="left:458px;top:197px;font-size:11.2px;line-height:11.2px;color:#161616;-webkit-text-stroke:0.12px #161616;transform-origin:6.22px 50%;transform:translate(0.28px,0.10px) rotate(0.03deg) scaleX(0.8575);">1</div>
<div class="t" style="left:518px;top:197px;font-size:11.2px;line-height:11.2px;color:#161616;-webkit-text-stroke:0.12px #161616;transform-origin:21.78px 50%;transform:translate(0.22px,0.10px) rotate(0.03deg) scaleX(0.9498);">6,00</div>
<div class="t" style="left:593px;top:197px;font-size:11.2px;line-height:11.2px;color:#161616;-webkit-text-stroke:0.12px #161616;transform-origin:21.78px 50%;transform:translate(0.22px,0.10px) rotate(0.03deg) scaleX(0.9498);">6,00</div>
<div class="t" style="left:741px;top:197px;font-size:11.2px;line-height:11.2px;color:#161616;-webkit-text-stroke:0.12px #161616;transform-origin:12.43px 50%;transform:translate(0.32px,0.10px) rotate(0.03deg) scaleX(0.9299);">20</div>
<div class="t" style="left:806px;top:197px;font-size:11.2px;line-height:11.2px;color:#161616;-webkit-text-stroke:0.12px #161616;transform-origin:21.78px 50%;transform:translate(0.22px,0.10px) rotate(0.03deg) scaleX(0.9498);">1,00</div>
<div class="t" style="left:834px;top:199px;font-size:6.4px;line-height:6.4px;color:#161616;-webkit-text-stroke:0.15px #161616;transform-origin:0.00px 50%;transform:translate(0.00px,0.10px) rotate(0.03deg) scaleX(0.9291);">3</div>
<div class="t" style="left:2px;top:254px;font-size:7.4px;line-height:7.4px;color:#1a1a1a;-webkit-text-stroke:0.15px #1a1a1a;transform-origin:0.00px 50%;transform:translate(0.50px,0.75px) rotate(0.03deg) scaleX(0.9688);">Товар</div>
<div class="t" style="left:5px;top:269px;font-size:14.8px;line-height:14.8px;color:#111;font-weight:bold;-webkit-text-stroke:0.2px #111;transform-origin:0.00px 50%;transform:translate(0.00px,0.75px) rotate(0.03deg) scaleX(1.0071);">товар 3</div>
<div class="t" style="left:2px;top:291px;font-size:7.4px;line-height:7.4px;color:#1a1a1a;-webkit-text-stroke:0.15px #1a1a1a;transform-origin:0.00px 50%;transform:translate(0.50px,0.00px) rotate(0.03deg) scaleX(1.0235);">Штрихкод</div>
<div class="t" style="left:5px;top:306px;font-size:14.8px;line-height:14.8px;color:#111;font-weight:bold;-webkit-text-stroke:0.2px #111;transform-origin:0.00px 50%;transform:translate(0.00px,0.00px) rotate(0.03deg) scaleX(1.0607);">2800000000028</div>
<div class="t" style="left:137px;top:291px;font-size:7.4px;line-height:7.4px;color:#1a1a1a;-webkit-text-stroke:0.15px #1a1a1a;transform-origin:0.00px 50%;transform:translate(0.00px,0.00px) rotate(0.03deg) scaleX(1.0192);">Количество</div>
<div class="t" style="left:247px;top:306px;font-size:14.8px;line-height:14.8px;color:#111;font-weight:bold;-webkit-text-stroke:0.2px #111;transform-origin:8.21px 50%;transform:translate(0.54px,0.00px) rotate(0.03deg) scaleX(0.7670);">1</div>
<svg class="b" style="left:255.60px;top:318.80px" width="3.0" height="3.0" viewBox="0 0 10 10"><polygon points="10,0 10,10 0,10" fill="#2a8fd0"/></svg>
<div class="t" style="left:262px;top:291px;font-size:7.4px;line-height:7.4px;color:#1a1a1a;-webkit-text-stroke:0.15px #1a1a1a;transform-origin:0.00px 50%;transform:translate(0.50px,0.00px) rotate(0.03deg) scaleX(0.9181);">Ед. изм.</div>
<div class="t" style="left:264px;top:306px;font-size:14.8px;line-height:14.8px;color:#111;font-weight:bold;-webkit-text-stroke:0.2px #111;transform-origin:0.00px 50%;transform:translate(0.50px,0.00px) rotate(0.03deg) scaleX(1.0523);">кг</div>
<div class="t" style="left:352px;top:291px;font-size:7.4px;line-height:7.4px;color:#1a1a1a;-webkit-text-stroke:0.15px #1a1a1a;transform-origin:0.00px 50%;transform:translate(0.50px,0.00px) rotate(0.03deg) scaleX(0.9392);">Цена</div>
<div class="t" style="left:510px;top:306px;font-size:14.8px;line-height:14.8px;color:#111;font-weight:bold;-webkit-text-stroke:0.2px #111;transform-origin:28.79px 50%;transform:translate(0.71px,0.00px) rotate(0.03deg) scaleX(1.0509);">9,00</div>
<div class="t" style="left:545px;top:291px;font-size:7.4px;line-height:7.4px;color:#1a1a1a;-webkit-text-stroke:0.15px #1a1a1a;transform-origin:0.00px 50%;transform:translate(0.00px,0.00px) rotate(0.03deg) scaleX(0.9883);">Сумма</div>
<div class="t" style="left:703px;top:306px;font-size:14.8px;line-height:14.8px;color:#111;font-weight:bold;-webkit-text-stroke:0.2px #111;transform-origin:28.79px 50%;transform:translate(0.01px,0.00px) rotate(0.03deg) scaleX(1.0248);">8,10</div>
<div class="t" style="left:9px;top:329px;font-size:7.4px;line-height:7.4px;color:#222;-webkit-text-stroke:0.15px #222;transform-origin:0.00px 50%;transform:translate(0.00px,0.00px) rotate(0.03deg) scaleX(1.0098);">Условие акции</div>
<div class="t" style="left:76px;top:329px;font-size:7.4px;line-height:7.4px;color:#222;-webkit-text-stroke:0.15px #222;transform-origin:0.00px 50%;transform:translate(0.00px,0.00px) rotate(0.03deg) scaleX(1.0264);">Возможные акции</div>
<div class="t" style="left:155px;top:329px;font-size:7.4px;line-height:7.4px;color:#222;-webkit-text-stroke:0.15px #222;transform-origin:0.00px 50%;transform:translate(0.00px,0.00px) rotate(0.03deg) scaleX(1.0042);">Остатки в других магазинах</div>
<div class="t" style="left:80px;top:344px;font-size:7.4px;line-height:7.4px;color:#1a1a1a;-webkit-text-stroke:0.15px #1a1a1a;transform-origin:10.27px 50%;transform:translate(0.23px,0.75px) rotate(0.03deg) scaleX(1.0226);">Акция</div>
<div class="t" style="left:241px;top:344px;font-size:7.4px;line-height:7.4px;color:#1a1a1a;-webkit-text-stroke:0.15px #1a1a1a;transform-origin:25.64px 50%;transform:translate(0.26px,0.75px) rotate(0.03deg) scaleX(1.0189);">Наименование</div>
<div class="t" style="left:361px;top:344px;font-size:7.4px;line-height:7.4px;color:#1a1a1a;-webkit-text-stroke:0.15px #1a1a1a;transform-origin:24.66px 50%;transform:translate(0.94px,0.75px) rotate(0.03deg) scaleX(0.9986);">Действует (от)</div>
<div class="t" style="left:426px;top:344px;font-size:7.4px;line-height:7.4px;color:#1a1a1a;-webkit-text-stroke:0.15px #1a1a1a;transform-origin:25.22px 50%;transform:translate(0.68px,0.75px) rotate(0.03deg) scaleX(0.9865);">Действует (до)</div>
<div class="t" style="left:494px;top:344px;font-size:7.4px;line-height:7.4px;color:#1a1a1a;-webkit-text-stroke:0.15px #1a1a1a;transform-origin:27.07px 50%;transform:translate(0.43px,0.75px) rotate(0.03deg) scaleX(1.0161);">Процент скидки</div>
<div class="t" style="left:574px;top:344px;font-size:7.4px;line-height:7.4px;color:#1a1a1a;-webkit-text-stroke:0.15px #1a1a1a;transform-origin:27.55px 50%;transform:translate(0.20px,0.75px) rotate(0.03deg) scaleX(1.0618);">Кол-во по акции</div>
<div class="t" style="left:666px;top:344px;font-size:7.4px;line-height:7.4px;color:#1a1a1a;-webkit-text-stroke:0.15px #1a1a1a;transform-origin:24.03px 50%;transform:translate(0.47px,0.75px) rotate(0.03deg) scaleX(1.0195);">Сумма скидки</div>
<svg class="b" style="left:174.80px;top:358.80px" width="2.8" height="2.8" viewBox="0 0 10 10"><polygon points="10,0 10,10 0,10" fill="#e02020"/></svg>
<svg class="b" style="left:416.10px;top:358.80px" width="2.8" height="2.8" viewBox="0 0 10 10"><polygon points="10,0 10,10 0,10" fill="#e02020"/></svg>
<svg class="b" style="left:480.40px;top:358.80px" width="2.8" height="2.8" viewBox="0 0 10 10"><polygon points="10,0 10,10 0,10" fill="#e02020"/></svg>
<svg class="b" style="left:641.60px;top:358.80px" width="2.8" height="2.8" viewBox="0 0 10 10"><polygon points="10,0 10,10 0,10" fill="#2a8fd0"/></svg>
<svg class="b" style="left:731.80px;top:358.80px" width="2.8" height="2.8" viewBox="0 0 10 10"><polygon points="10,0 10,10 0,10" fill="#2a8fd0"/></svg>
<div class="t" style="left:5px;top:365px;font-size:7.3px;line-height:7.3px;color:#1a1a1a;-webkit-text-stroke:0.15px #1a1a1a;transform-origin:0.00px 50%;transform:translate(0.00px,0.75px) rotate(0.03deg) scaleX(0.9780);">скидка 10% от 2ух ед</div>
<div class="t" style="left:180px;top:365px;font-size:7.3px;line-height:7.3px;color:#1a1a1a;-webkit-text-stroke:0.15px #1a1a1a;transform-origin:0.00px 50%;transform:translate(0.75px,0.75px) rotate(0.03deg) scaleX(1.0173);">1+1 = скидка  -10%</div>
<div class="t" style="left:388px;top:365px;font-size:7.3px;line-height:7.3px;color:#1a1a1a;-webkit-text-stroke:0.15px #1a1a1a;transform-origin:28.43px 50%;transform:translate(0.57px,0.75px) rotate(0.03deg) scaleX(0.9232);">19.09.24</div>
<div class="t" style="left:453px;top:365px;font-size:7.3px;line-height:7.3px;color:#1a1a1a;-webkit-text-stroke:0.15px #1a1a1a;transform-origin:28.43px 50%;transform:translate(0.57px,0.75px) rotate(0.03deg) scaleX(0.9232);">30.09.28</div>
<div class="t" style="left:546px;top:365px;font-size:7.3px;line-height:7.3px;color:#1a1a1a;-webkit-text-stroke:0.15px #1a1a1a;transform-origin:8.10px 50%;transform:translate(0.60px,0.75px) rotate(0.03deg) scaleX(0.8392);">10</div>
<div class="t" style="left:638px;top:365px;font-size:7.3px;line-height:7.3px;color:#1a1a1a;-webkit-text-stroke:0.15px #1a1a1a;transform-origin:4.05px 50%;transform:translate(0.55px,0.75px) rotate(0.03deg) scaleX(0.6417);">1</div>
<div class="t" style="left:718px;top:365px;font-size:7.3px;line-height:7.3px;color:#1a1a1a;-webkit-text-stroke:0.15px #1a1a1a;transform-origin:14.20px 50%;transform:translate(0.30px,0.75px) rotate(0.03deg) scaleX(0.9156);">0,90</div>
<svg class="b" style="left:742.30px;top:252.80px" width="7" height="7" viewBox="0 0 7 7"><circle cx="3.5" cy="3.5" r="2.75" fill="none" stroke="#a0a0a0" stroke-width="0.7"/><line x1="2" y1="3.5" x2="5" y2="3.5" stroke="#a0a0a0" stroke-width="0.7"/></svg>
<div class="t" style="left:751px;top:252px;font-size:7.3px;line-height:7.3px;color:#a0a0a0;-webkit-text-stroke:0.15px #a0a0a0;transform-origin:0.00px 50%;transform:translate(0.20px,0.80px) rotate(0.03deg) scaleX(0.9464);">Оплата</div>
<div class="t" style="left:764px;top:268px;font-size:13.6px;line-height:13.6px;color:#111;font-weight:bold;-webkit-text-stroke:0.2px #111;transform-origin:53.48px 50%;transform:translate(0.22px,0.30px) rotate(0.03deg) scaleX(0.9975);">Смешанная (F9)</div>
<div class="t" style="left:764px;top:293px;font-size:13.6px;line-height:13.6px;color:#111;font-weight:bold;-webkit-text-stroke:0.2px #111;transform-origin:53.04px 50%;transform:translate(0.66px,0.60px) rotate(0.03deg) scaleX(1.0275);">Карточкой (F10)</div>
<div class="t" style="left:759px;top:318px;font-size:13.6px;line-height:13.6px;color:#111;font-weight:bold;-webkit-text-stroke:0.2px #111;transform-origin:58.04px 50%;transform:translate(0.66px,0.90px) rotate(0.03deg) scaleX(1.0209);">Наличными (F11)</div>
<div class="t" style="left:750px;top:343px;font-size:13.6px;line-height:13.6px;color:#111;font-weight:bold;-webkit-text-stroke:0.2px #111;transform-origin:67.32px 50%;transform:translate(0.38px,0.70px) rotate(0.03deg) scaleX(1.0012);">Обнулить (shift F11)</div>
<svg class="b" style="left:741.70px;top:365.60px" width="7" height="7" viewBox="0 0 7 7"><circle cx="3.5" cy="3.5" r="2.75" fill="none" stroke="#a0a0a0" stroke-width="0.7"/><line x1="2" y1="3.5" x2="5" y2="3.5" stroke="#a0a0a0" stroke-width="0.7"/></svg>
<div class="t" style="left:750px;top:365px;font-size:7.3px;line-height:7.3px;color:#a0a0a0;-webkit-text-stroke:0.15px #a0a0a0;transform-origin:0.00px 50%;transform:translate(0.60px,0.60px) rotate(0.03deg) scaleX(1.0562);">Итого</div>
<div class="t" style="left:741px;top:377px;font-size:7.4px;line-height:7.4px;color:#1a1a1a;-webkit-text-stroke:0.15px #1a1a1a;transform-origin:0.00px 50%;transform:translate(0.20px,0.60px) rotate(0.03deg) scaleX(1.0153);">Сумма скидки</div>
<div class="t" style="left:852px;top:393px;font-size:20.5px;line-height:20.5px;color:#111;font-weight:bold;-webkit-text-stroke:0.2px #111;transform-origin:39.87px 50%;transform:translate(0.13px,0.30px) rotate(0.03deg) scaleX(0.9706);">2,00</div>
<svg class="b" style="left:891.00px;top:411.80px" width="3.0" height="3.0" viewBox="0 0 10 10"><polygon points="10,0 10,10 0,10" fill="#2a8fd0"/></svg>
<div class="t" style="left:741px;top:420px;font-size:7.4px;line-height:7.4px;color:#1a1a1a;-webkit-text-stroke:0.15px #1a1a1a;transform-origin:0.00px 50%;transform:translate(0.20px,0.60px) rotate(0.03deg) scaleX(1.0071);">Сумма чека</div>
<div class="t" style="left:840px;top:436px;font-size:20.5px;line-height:20.5px;color:#111;font-weight:bold;-webkit-text-stroke:0.2px #111;transform-origin:51.35px 50%;transform:translate(0.55px,0.80px) rotate(0.03deg) scaleX(0.9795);">30,00</div>
<svg class="b" style="left:94.8px;top:455.8px" width="8.2" height="8.2" viewBox="0 0 8.2 8.2"><path d="M0.4 3.1 C0.9 1.5 2.4 0.7 4.0 0.7 C5.0 0.7 5.8 1.0 6.5 1.6" fill="none" stroke="#1c1c1c" stroke-width="0.85"/><polygon points="5.5,3.0 7.9,3.0 7.9,0.6" fill="#1c1c1c"/><path d="M7.8 4.7 C7.3 6.3 5.8 7.1 4.2 7.1 C3.2 7.1 2.4 6.8 1.7 6.2" fill="none" stroke="#35aef0" stroke-width="0.95"/><polygon points="3.0,4.6 0.3,4.6 0.3,7.3" fill="#35aef0"/></svg>
<svg class="b" style="left:202.50px;top:439.00px" width="7" height="7" viewBox="0 0 7 7"><circle cx="3.5" cy="3.5" r="2.75" fill="none" stroke="#a0a0a0" stroke-width="0.7"/><line x1="2" y1="3.5" x2="5" y2="3.5" stroke="#a0a0a0" stroke-width="0.7"/></svg>
<div class="t" style="left:211px;top:439px;font-size:7.3px;line-height:7.3px;color:#a0a0a0;-webkit-text-stroke:0.15px #a0a0a0;transform-origin:0.00px 50%;transform:translate(0.40px,0.00px) rotate(0.03deg) scaleX(1.0030);">Текущие значения</div>
<div class="t" style="left:200px;top:451px;font-size:7.4px;line-height:7.4px;color:#1a1a1a;-webkit-text-stroke:0.15px #1a1a1a;transform-origin:0.00px 50%;transform:translate(0.90px,0.00px) rotate(0.03deg) scaleX(1.0537);">Компьютер</div>
<div class="t" style="left:246px;top:453px;font-size:7.4px;line-height:7.4px;color:#222;-webkit-text-stroke:0.15px #222;transform-origin:0.00px 50%;transform:translate(0.25px,0.25px) rotate(0.03deg) scaleX(0.9527);">LsFusionPos</div>
<div class="t" style="left:200px;top:468px;font-size:7.4px;line-height:7.4px;color:#1a1a1a;-webkit-text-stroke:0.15px #1a1a1a;transform-origin:0.00px 50%;transform:translate(0.90px,0.25px) rotate(0.03deg) scaleX(0.9697);">Время</div>
<div class="t" style="left:228px;top:469px;font-size:7.4px;line-height:7.4px;color:#222;-webkit-text-stroke:0.15px #222;transform-origin:0.00px 50%;transform:translate(0.25px,0.50px) rotate(0.03deg) scaleX(0.9110);">14.10.24 17:30</div>
<div class="t" style="left:278px;top:468px;font-size:7.4px;line-height:7.4px;color:#1a1a1a;-webkit-text-stroke:0.15px #1a1a1a;transform-origin:0.00px 50%;transform:translate(0.75px,0.25px) rotate(0.03deg) scaleX(0.9995);">Пользователь</div>
<div class="t" style="left:331px;top:469px;font-size:7.4px;line-height:7.4px;color:#222;-webkit-text-stroke:0.15px #222;transform-origin:0.00px 50%;transform:translate(0.75px,0.50px) rotate(0.03deg) scaleX(1.0106);">кассир маг 1</div>
<svg class="b" style="left:402.50px;top:439.00px" width="7" height="7" viewBox="0 0 7 7"><circle cx="3.5" cy="3.5" r="2.75" fill="none" stroke="#a0a0a0" stroke-width="0.7"/><line x1="2" y1="3.5" x2="5" y2="3.5" stroke="#a0a0a0" stroke-width="0.7"/></svg>
<div class="t" style="left:411px;top:439px;font-size:7.3px;line-height:7.3px;color:#a0a0a0;-webkit-text-stroke:0.15px #a0a0a0;transform-origin:0.00px 50%;transform:translate(0.40px,0.00px) rotate(0.03deg) scaleX(0.9995);">Действия с кассой</div>
<div class="t" style="left:401px;top:450px;font-size:7.4px;line-height:7.4px;color:#1a1a1a;-webkit-text-stroke:0.15px #1a1a1a;transform-origin:0.00px 50%;transform:translate(0.80px,0.90px) rotate(0.03deg) scaleX(1.0095);">Отключить ФР</div>
<svg class="b" style="left:449.00px;top:475.90px" width="3.0" height="3.0" viewBox="0 0 10 10"><polygon points="10,0 10,10 0,10" fill="#2a8fd0"/></svg>
<div class="t" style="left:464px;top:461px;font-size:7.4px;line-height:7.4px;color:#111;-webkit-text-stroke:0.15px #111;transform-origin:19.07px 50%;transform:translate(0.68px,0.50px) rotate(0.03deg) scaleX(1.0093);">Копия чека</div>
<div class="t" style="left:525px;top:461px;font-size:7.4px;line-height:7.4px;color:#111;-webkit-text-stroke:0.15px #111;transform-origin:23.79px 50%;transform:translate(0.58px,0.50px) rotate(0.03deg) scaleX(1.0351);">Прогон ленты</div>
<div class="t" style="left:595px;top:461px;font-size:7.4px;line-height:7.4px;color:#111;-webkit-text-stroke:0.15px #111;transform-origin:22.57px 50%;transform:translate(0.18px,0.50px) rotate(0.03deg) scaleX(0.9803);">Отрезать чек</div>
<div class="t" style="left:662px;top:461px;font-size:7.4px;line-height:7.4px;color:#111;-webkit-text-stroke:0.15px #111;transform-origin:30.97px 50%;transform:translate(0.41px,0.50px) rotate(0.03deg) scaleX(1.0171);">Наличных в кассе</div>
</div>
</div></body></html>
